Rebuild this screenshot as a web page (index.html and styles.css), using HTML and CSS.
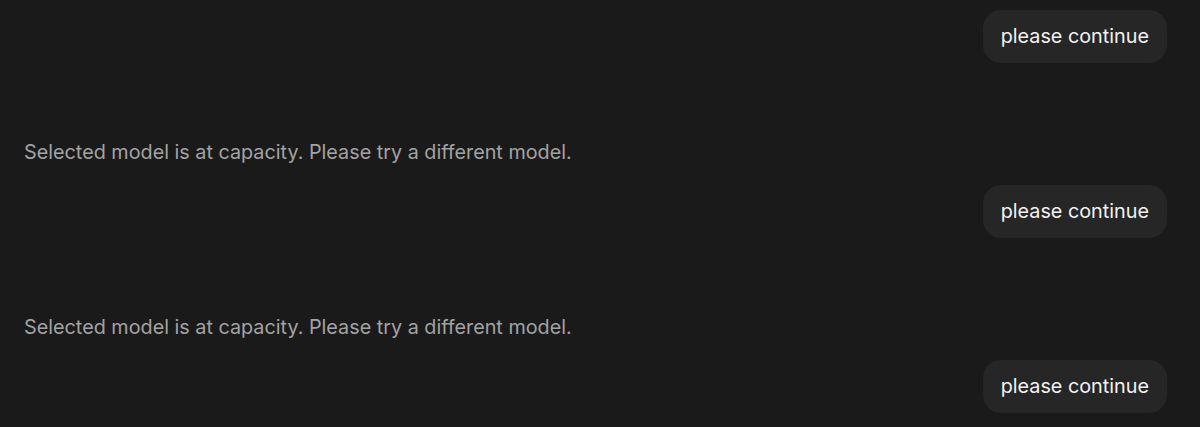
FILE: index.html
```html
<!DOCTYPE html>
<html>
<head>
<meta charset="utf-8">
<link rel="stylesheet" href="styles.css">
</head>
<body>
<div class="chat">
  <div class="user-row"><div class="bubble">please continue</div></div>
  <div class="error">Selected model is at capacity. Please try a different model.</div>
  <div class="user-row"><div class="bubble">please continue</div></div>
  <div class="error">Selected model is at capacity. Please try a different model.</div>
  <div class="user-row"><div class="bubble">please continue</div></div>
</div>
</body>
</html>
```
FILE: styles.css
```css
html, body {
  margin: 0;
  padding: 0;
  background: #1a1a1a;
  height: 100%;
  overflow: hidden;
}
.chat {
  display: flex;
  flex-direction: column;
  padding: 10px 33px 0 24px;
  font-family: Inter, "Liberation Sans", sans-serif;
}
.user-row {
  display: flex;
  justify-content: flex-end;
}
.bubble {
  background: #262626;
  color: #f2f2f2;
  font-size: 19.8px;
  line-height: 27px;
  padding: 13px 18px;
  border-radius: 18px;
}
.error {
  color: #a3a3a3;
  font-size: 19.8px;
  line-height: 27px;
  margin: 76px 0 19px;
}
```
